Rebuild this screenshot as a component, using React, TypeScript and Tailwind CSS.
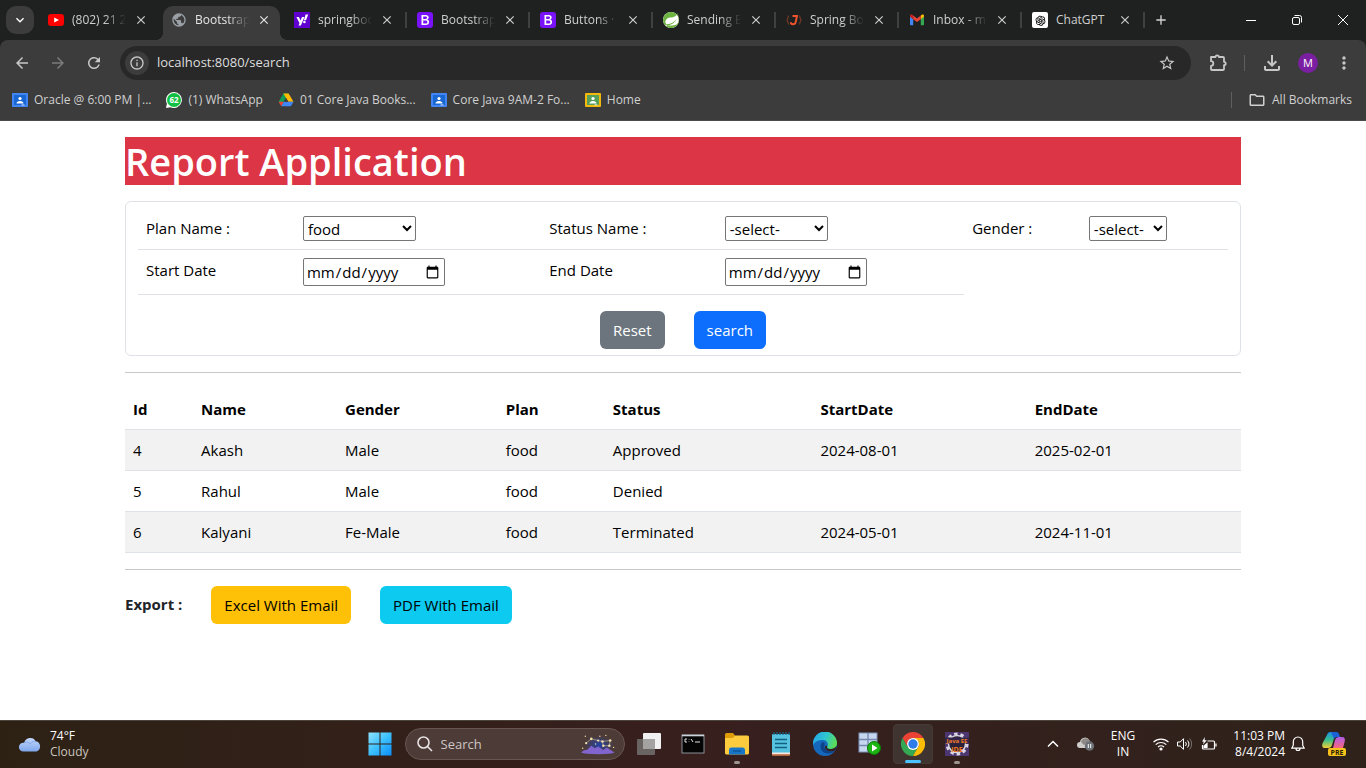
import type { ReactNode } from 'react';
import { AiOutlineOpenAI } from 'react-icons/ai';
import { SiSpring } from 'react-icons/si';
import {
  MdAdd,
  MdArrowBack,
  MdArrowForward,
  MdClose,
  MdInfoOutline,
  MdKeyboardArrowDown,
  MdMoreVert,
  MdOutlineFileDownload,
  MdOutlineFolder,
  MdPublic,
  MdRefresh,
  MdStarBorder,
} from 'react-icons/md';

/* ---------- brand drawings ---------- */

function YouTubeIcon() {
  return (
    <svg viewBox="0 0 16 16" className="size-4">
      <rect x="0" y="2" width="16" height="12" rx="3" fill="#ff0000" />
      <path d="M6.2 5.4v5.2L11 8z" fill="#fff" />
    </svg>
  );
}

function YahooIcon() {
  return (
    <svg viewBox="0 0 16 16" className="size-4">
      <rect width="16" height="16" fill="#6001d2" />
      <path d="M2.4 5h2.5l1.6 3.600L8 5h2.400L6.900 13.400H4.500l1-2.400z" fill="#fff" />
      <path d="M11.600 2.600h2.600L12 8.200H9.900z" fill="#fff" />
      <circle cx="10.400" cy="10" r="1.300" fill="#fff" />
    </svg>
  );
}

function BootstrapIcon() {
  return (
    <svg viewBox="0 0 16 16" className="size-4">
      <rect width="16" height="16" rx="3" fill="#7a12f9" />
      <path
        fillRule="evenodd"
        fill="#fff"
        d="M4.500 3h4.200c1.900 0 3 1 3 2.500 0 1-.7 1.900-1.700 2.100 1.300.2 2.100 1.100 2.100 2.400 0 1.900-1.300 3-3.400 3H4.500zM6.200 4.400v2.700h1.900c1.200 0 1.900-.5 1.900-1.400 0-.8-.6-1.300-1.600-1.300zM6.200 8.400v3.200h2.200c1.300 0 2-.6 2-1.600s-.8-1.600-2.100-1.600z"
      />
    </svg>
  );
}

function SpringIcon() {
  return (
    <span className="flex size-4 items-center justify-center rounded-full bg-white">
      <SiSpring className="size-4 text-[#6db33f]" />
    </span>
  );
}

function JavaBracesIcon() {
  return (
    <svg viewBox="0 0 16 16" className="size-4" fill="none">
      <path d="M3 3.500C1.500 3.500 2.500 8 .5 8c2 0 1 4.500 2.500 4.500M13 3.500c1.500 0 .5 4.500 2.500 4.500-2 0-1 4.500-2.500 4.500" stroke="#8f3f2a" strokeWidth="1" />
      <path d="M6.500 4h4.500L9.700 10c-.4 1.700-1.300 2.300-2.700 2.300-1.300 0-2.200-.7-2.200-2" stroke="#f0532d" strokeWidth="1.900" />
    </svg>
  );
}

function GmailIcon() {
  return (
    <svg viewBox="0 0 16 16" className="size-4">
      <path d="M1 4v8.200c0 .6.400 1 1 1h2.200V7z" fill="#4285f4" />
      <path d="M15 4v8.200c0 .6-.4 1-1 1h-2.200V7z" fill="#34a853" />
      <path d="M11.800 3.600V7.200L15 4.800V3.800c0-1.300-1.300-1.800-2.200-1z" fill="#fbbc04" />
      <path d="M1 4.800l3.200 2.400V3.600l-1-.8C2.300 2 1 2.500 1 3.800z" fill="#c5221f" />
      <path d="M4.200 3.500L8 6.400l3.800-2.900v3.700L8 10.100 4.200 7.200z" fill="#ea4335" />
    </svg>
  );
}

function ChatGptIcon() {
  return (
    <span className="flex size-4 items-center justify-center rounded-xs bg-white">
      <AiOutlineOpenAI className="text-black" size={13} />
    </span>
  );
}

function ClassroomIcon({ frame, board }: { frame: string; board: string }) {
  return (
    <svg viewBox="0 0 16 16" className="size-4">
      <rect x="0" y="1" width="16" height="14" rx="1" fill={frame} />
      <rect x="2" y="3" width="12" height="10" fill={board} />
      <circle cx="8" cy="6.500" r="1.600" fill="#fff" />
      <path d="M4.500 11.500c0-1.800 1.600-2.600 3.500-2.600s3.500.8 3.500 2.600z" fill="#fff" />
      <rect x="9.500" y="12.200" width="3" height="1.300" fill="#fff" opacity=".6" />
    </svg>
  );
}

function WhatsAppIcon() {
  return (
    <svg viewBox="0 0 16 16" className="size-4">
      <path d="M8 0a8 8 0 1 1-3.600 15.200L0 16l.9-4.300A8 8 0 0 1 8 0z" fill="#fff" />
      <circle cx="8" cy="8" r="7" fill="#12c144" />
      <text x="8" y="10.800" textAnchor="middle" fontSize="8" fontWeight="700" fill="#fff" fontFamily="Open Sans, sans-serif">
        62
      </text>
    </svg>
  );
}

function DriveIcon() {
  return (
    <svg viewBox="0 0 16 16" className="size-4">
      <path d="M5.400 1.500h5.200L8 6 3.400 14 .8 9.500z" fill="#0f9d58" />
      <path d="M5.400 1.500h5.200l4.900 8.300h-5.200z" fill="#ffba00" />
      <path d="M5.700 9.800h9.800L12.900 14.200H3.200z" fill="#4285f4" />
      <path d="M.6 9.800h5.100l-2.500 4.400z" fill="#ea4335" />
      <path d="M8 6l2.200 3.800H5.800z" fill="#3c3c3c" />
    </svg>
  );
}

function PuzzleIcon() {
  return (
    <svg viewBox="0 0 20 20" className="size-5" fill="none" stroke="currentColor" strokeWidth="1.800" strokeLinejoin="round">
      <path d="M3 4h4.500a1.700 1.700 0 0 1 3.400 0H15a1 1 0 0 1 1 1v3.800a1.700 1.700 0 0 1 0 3.400V16a1 1 0 0 1-1 1H4a1 1 0 0 1-1-1v-3.200a2.300 2.300 0 0 0 0-4.600z" />
    </svg>
  );
}

function WindowsIcon() {
  return (
    <svg viewBox="0 0 24 24" className="size-6">
      <defs>
        <linearGradient id="win" x1="0" y1="0" x2="1" y2="1">
          <stop offset="0" stopColor="#8fe3ff" />
          <stop offset=".5" stopColor="#3cc0fd" />
          <stop offset="1" stopColor="#0a8ffb" />
        </linearGradient>
      </defs>
      <path d="M.5.500h11v11H.5zM12.500.500h11v11h-11zM.5 12.500h11v11H.5zM12.500 12.500h11v11h-11z" fill="url(#win)" />
    </svg>
  );
}

function CloudIcon() {
  return (
    <svg viewBox="0 0 26 18" className="h-4 w-6">
      <defs>
        <linearGradient id="cloud" x1="0" y1="0" x2="0" y2="1">
          <stop offset="0" stopColor="#c3d9fc" />
          <stop offset="1" stopColor="#7ea6ec" />
        </linearGradient>
      </defs>
      <path d="M5.500 17.500a5 5 0 0 1 0-10h1A7 7 0 0 1 19.500 6a6 6 0 0 1 1 11.500z" fill="url(#cloud)" />
      <path d="M7 7.500c3-1.500 5.500 0 6.500 2M13 9c2-3 5-3.500 7-2.500" stroke="#7fa6e8" strokeWidth="1" fill="none" />
    </svg>
  );
}

function ConstellationIcon() {
  return (
    <svg viewBox="0 0 40 24" className="h-6 w-10">
      <defs>
        <radialGradient id="night">
          <stop offset="0" stopColor="#2443a8" />
          <stop offset="1" stopColor="#2443a8" stopOpacity="0" />
        </radialGradient>
      </defs>
      <ellipse cx="21" cy="13" rx="17" ry="10" fill="url(#night)" />
      <path d="M0 22q4-4 7-3l5-5 4 3 4-2 6 4 4-3 9 6q-3 2-19 2T0 22z" fill="#8264cf" />
      <path d="M6 11l6-5 8 2 5 1 9-1-1 6h-7l-1-5" fill="none" stroke="#c4b78f" strokeWidth=".8" />
      <g fill="#f1dfae">
        <circle cx="6" cy="11" r="1.300" />
        <circle cx="12" cy="6" r="1.500" />
        <circle cx="20" cy="8" r="1.300" />
        <circle cx="25" cy="9" r="1.500" />
        <circle cx="34" cy="8" r="1.500" />
        <circle cx="33" cy="14" r="1.500" />
        <circle cx="26" cy="14" r="1.400" />
        <circle cx="5" cy="3" r=".8" />
        <circle cx="22" cy="3" r=".8" />
        <circle cx="2" cy="17" r=".8" />
        <circle cx="17" cy="12" r=".8" />
        <circle cx="29" cy="2" r=".8" />
        <circle cx="38" cy="16" r=".8" />
      </g>
    </svg>
  );
}

function TaskViewIcon() {
  return (
    <svg viewBox="0 0 24 24" className="size-6">
      <rect x="6" y="1" width="18" height="16" rx="1" fill="#f1f1f1" />
      <rect x="0" y="7" width="18" height="16" rx="1" fill="#6f6b69" fillOpacity=".9" />
      <rect x="6" y="7" width="12" height="10" fill="#a5a3a2" />
    </svg>
  );
}

function TerminalIcon() {
  return (
    <svg viewBox="0 0 24 24" className="size-6">
      <rect x="1" y="3" width="22" height="18" fill="#050505" stroke="#8b9197" />
      <path d="M1 3.500h22" stroke="#cbd3da" strokeWidth="1.600" />
      <path d="M6 7H4v3h2M8 7.500v.5M8 9.500v.5M10 7l2 3M14 10h5" stroke="#e5e5e5" strokeWidth="1" fill="none" />
    </svg>
  );
}

function ExplorerIcon() {
  return (
    <svg viewBox="0 0 24 24" className="size-6">
      <path d="M0 2.500A1.500 1.500 0 0 1 1.500 1H8l2 2.500V6H0z" fill="#dd9c08" />
      <path d="M0 6h8l2-2.500h12.500A1.500 1.500 0 0 1 24 5v16a1.500 1.500 0 0 1-1.500 1.500h-21A1.500 1.500 0 0 1 0 21z" fill="#fdcb3e" />
      <path d="M4 22.500V18a2.500 2.500 0 0 1 2.500-2.500h11A2.500 2.500 0 0 1 20 18v4.500z" fill="#1876c9" />
      <path d="M8 19h8" stroke="#0c4f8f" strokeWidth="1.200" />
    </svg>
  );
}

function NotepadIcon() {
  return (
    <svg viewBox="0 0 24 24" className="size-6">
      <rect x="3" y="2" width="18" height="20" rx="1" fill="#56c2df" />
      <path d="M3 20.500h18v2a1 1 0 0 1-1 1H4a1 1 0 0 1-1-1z" fill="#f3e9e2" />
      <path d="M3 23h18" stroke="#b8592a" strokeWidth="1.400" />
      <path d="M5 0v3M8 0v3M11 0v3M14 0v3M17 0v3M20 0v3" stroke="#14668a" strokeWidth="1.200" />
      <path d="M6 7.500h12M6 11.500h12M6 15.500h12" stroke="#10607f" strokeWidth="1.500" />
    </svg>
  );
}

function EdgeIcon() {
  return (
    <svg viewBox="0 0 24 24" className="size-6">
      <defs>
        <linearGradient id="edgeTop" x1="0" y1=".3" x2="1" y2=".6">
          <stop offset="0" stopColor="#26a6e8" />
          <stop offset=".5" stopColor="#2fc6cf" />
          <stop offset="1" stopColor="#5fe04c" />
        </linearGradient>
      </defs>
      <circle cx="12" cy="12" r="12" fill="#1668bd" />
      <path d="M0 12A12 12 0 0 1 24 11c0 4-3 6-6.500 6-3 0-4-1.200-3.300-2.200 1.300-2 .8-6.300-4-6.800C5 7.500 1.500 10 0 13z" fill="url(#edgeTop)" />
      <path d="M9 10.500c-3 3.500-1.500 10.500 5.500 11 3 .2 6-1 7.500-3-2 1.300-12 1.500-10.500-5.500.5-2-.5-3.500-2.500-2.500z" fill="#0f4388" />
      <path d="M14.200 14.800c-.7 1 .3 2.200 3.300 2.200 2.500 0 4.800-1 5.800-3l-.9 4.300c-3.500 1.700-10 1.200-10.400-3.300-.1-1.500 2.600-1.500 2.200-.2z" fill="#33221d" />
    </svg>
  );
}

function ServerRunIcon() {
  return (
    <svg viewBox="0 0 24 24" className="size-6">
      <rect x="2" y="1" width="18" height="19" fill="#c7d7ef" stroke="#7f95bb" />
      <path d="M2 7.500h18M2 13.500h18M11 1v19" stroke="#7288b0" strokeWidth="1.300" />
      <circle cx="17" cy="16" r="6.500" fill="#1db513" stroke="#0b7d08" />
      <path d="M15 12.500v7l5.500-3.500z" fill="#fff" />
    </svg>
  );
}

function ChromeIcon() {
  return (
    <svg viewBox="0 0 24 24" className="size-6">
      <path d="M1.600 6A12 12 0 0 0 12 24l5.200-9L12 12 6.800 15z" fill="#34a853" />
      <path d="M22.400 6A12 12 0 0 1 12 24l5.200-9A6 6 0 0 0 17.200 9L12 6z" fill="#fbbc05" />
      <path d="M1.600 6A12 12 0 0 1 22.400 6H12a6 6 0 0 0-5.200 9z" fill="#ea4335" />
      <circle cx="12" cy="12" r="6" fill="#fff" />
      <circle cx="12" cy="12" r="4.700" fill="#2f7be9" />
    </svg>
  );
}

function EclipseIcon() {
  return (
    <svg viewBox="0 0 24 24" className="size-6">
      <rect width="24" height="24" fill="#4b3672" />
      <circle cx="12" cy="12" r="10" fill="none" stroke="#d9d6df" strokeWidth="3" strokeDasharray="3.400 2.883" />
      <circle cx="12" cy="12" r="8.500" fill="#2b2138" stroke="#d9d6df" strokeWidth="1.500" />
      <rect x="0" y="5.500" width="24" height="6" fill="#33264a" />
      <g fontFamily="Open Sans, sans-serif" fontWeight="700" fill="#f47a1c" textAnchor="middle">
        <text x="12" y="10.500" fontSize="6">Java EE</text>
        <text x="12" y="19.500" fontSize="7">IDE</text>
      </g>
    </svg>
  );
}

function CopilotIcon() {
  return (
    <svg viewBox="0 0 24 24" className="size-6">
      <defs>
        <linearGradient id="copA" x1="0" y1="0" x2="0" y2="1">
          <stop offset="0" stopColor="#1a8fe8" />
          <stop offset=".5" stopColor="#38c08c" />
          <stop offset="1" stopColor="#f3cf30" />
        </linearGradient>
        <linearGradient id="copB" x1="0" y1="0" x2="0" y2="1">
          <stop offset="0" stopColor="#b05de8" />
          <stop offset="1" stopColor="#f5687c" />
        </linearGradient>
      </defs>
      <path d="M5 3a4 4 0 0 1 4-3h5l-4 13a4 4 0 0 1-4 3H3c-2.500 0-3.300-2-2.600-4.500z" fill="url(#copA)" />
      <path d="M9 0h5.500A3 3 0 0 1 17 2l1 3h-3c-1.500 0-2.500 1-3 2z" fill="#1b62d8" />
      <path d="M13 8a4 4 0 0 1 3.500-3H20c2.500 0 3.400 2 2.700 4.500L21 16H11z" fill="url(#copB)" />
      <rect x="6" y="16" width="18" height="8" rx="2" fill="#f8c31c" />
      <text x="15" y="22.700" fontSize="7" fontWeight="700" textAnchor="middle" fill="#2b1d00" fontFamily="Open Sans, sans-serif">
        PRE
      </text>
    </svg>
  );
}

/* ---------- browser ---------- */

type Tab = { title: string; icon: ReactNode; active?: boolean; divider?: boolean };

const tabs: Tab[] = [
  { title: '(802) 21 25', icon: <YouTubeIcon /> },
  { title: 'Bootstrap d', icon: <MdPublic className="size-4 text-[#9aa0a6]" />, active: true },
  { title: 'springboot', icon: <YahooIcon />, divider: true },
  { title: 'Bootstrap ·', icon: <BootstrapIcon />, divider: true },
  { title: 'Buttons · B', icon: <BootstrapIcon />, divider: true },
  { title: 'Sending Em', icon: <SpringIcon />, divider: true },
  { title: 'Spring Boot', icon: <JavaBracesIcon />, divider: true },
  { title: 'Inbox - mo', icon: <GmailIcon />, divider: true },
  { title: 'ChatGPT', icon: <ChatGptIcon />, divider: true },
];

function BrowserTab({ title, icon, active, divider }: Tab) {
  return (
    <div className="flex h-10 w-[123px] min-w-0 shrink items-end">
      <div
        className={
          active
            ? 'relative flex h-[34px] min-w-0 grow items-center rounded-t-[10px] bg-[#3c3c3c] pr-[9px] pl-2 text-[#e6e6e6]'
            : 'flex h-[34px] min-w-0 grow items-center pr-[11px] pl-2 text-[#cfcfcf]'
        }
      >
        {active && (
          <>
            <span className="absolute bottom-0 -left-2 size-2 bg-[radial-gradient(circle_at_0_0,#1f2120_8px,#3c3c3c_8px)]" />
            <span className="absolute -right-2 bottom-0 size-2 bg-[radial-gradient(circle_at_100%_0,#1f2120_8px,#3c3c3c_8px)]" />
          </>
        )}
        <button type="button" className="mb-1.5 flex min-w-0 grow items-center gap-2">
          <span className="shrink-0">{icon}</span>
          <span
            className={
              title === 'ChatGPT'
                ? 'w-[54px] overflow-hidden text-left whitespace-nowrap'
                : 'w-[54px] overflow-hidden [mask-image:linear-gradient(to_right,black_60%,transparent)] text-left whitespace-nowrap'
            }
          >
            {title}
          </span>
        </button>
        <button type="button" aria-label={`Close ${title}`} className="mb-1.5 shrink-0">
          <MdClose className="size-3.5" />
        </button>
      </div>
      <span
        className={
          divider
            ? 'mr-0.5 mb-3 h-4 w-0.5 shrink-0 bg-[#3f4140]'
            : active
              ? 'mr-1 w-0.5 shrink-0'
              : 'mr-0.5 w-0.5 shrink-0'
        }
      />
    </div>
  );
}

function TabStrip() {
  return (
    <div className="flex h-10 bg-[#1f2120] text-[12px] text-[#d5d5d5]">
      <div className="flex w-10 shrink-0 items-center pl-1.5">
        <button type="button" aria-label="Search tabs" className="flex size-7 items-center justify-center rounded-[10px] bg-[#3c3c3c]">
          <MdKeyboardArrowDown className="size-4 text-white" />
        </button>
      </div>
      {tabs.map((tab, i) => (
        <BrowserTab key={i} {...tab} />
      ))}
      <button type="button" aria-label="New tab" className="flex w-7 shrink-0 items-center justify-center">
        <MdAdd className="size-4" />
      </button>
      <div className="ml-auto flex shrink-0 text-white">
        <button type="button" aria-label="Minimize" className="flex w-[46px] items-center justify-center">
          <svg viewBox="0 0 10 10" className="size-2.5" stroke="currentColor"><path d="M0 5.500h10" /></svg>
        </button>
        <button type="button" aria-label="Restore" className="flex w-[46px] items-center justify-center">
          <svg viewBox="0 0 10 10" className="size-2.5" fill="none" stroke="currentColor">
            <rect x=".5" y="2.500" width="7" height="7" rx="1.500" />
            <path d="M2.500.5h5a2 2 0 0 1 2 2v5" />
          </svg>
        </button>
        <button type="button" aria-label="Close window" className="flex w-[46px] items-center justify-center">
          <svg viewBox="0 0 10 10" className="size-2.5" stroke="currentColor"><path d="M0 0l10 10M10 0L0 10" /></svg>
        </button>
      </div>
    </div>
  );
}

function Toolbar() {
  return (
    <div className="flex h-[46px] items-center rounded-t-lg bg-[#3c3c3c] pr-3 pl-[13px] text-[#c7c7c7]">
      <button type="button" aria-label="Back"><MdArrowBack className="size-[18px]" /></button>
      <button type="button" aria-label="Forward" className="ml-[18px] text-[#7b7b7b]"><MdArrowForward className="size-[18px]" /></button>
      <button type="button" aria-label="Reload" className="ml-[18px]"><MdRefresh className="size-[18px]" /></button>
      <div className="ml-[17px] flex h-[34px] grow items-center rounded-full bg-[#282828] pr-[15px] pl-[5px]">
        <button type="button" aria-label="Site information" className="flex size-6 items-center justify-center rounded-full bg-[#3c3c3c]">
          <MdInfoOutline className="size-4" />
        </button>
        <input
          aria-label="Address"
          defaultValue="localhost:8080/search"
          className="ml-2 min-w-0 grow bg-transparent text-[13px] text-[#dedede] outline-none"
        />
        <button type="button" aria-label="Bookmark this page"><MdStarBorder className="size-[18px]" /></button>
      </div>
      <button type="button" aria-label="Extensions" className="ml-[17px]"><PuzzleIcon /></button>
      <span className="ml-4 h-4 w-px bg-[#5f5f5f]" />
      <button type="button" aria-label="Downloads" className="ml-[15px]"><MdOutlineFileDownload className="size-6" /></button>
      <button type="button" aria-label="Profile" className="ml-3.5 flex size-5 items-center justify-center rounded-full bg-[#7b1fa2] text-[11px] text-white">M</button>
      <button type="button" aria-label="Menu" className="ml-4"><MdMoreVert className="size-5" /></button>
    </div>
  );
}

function Bookmark({ icon, children }: { icon: ReactNode; children: ReactNode }) {
  return (
    <a href="#" className="flex items-center gap-1.5 whitespace-nowrap">
      {icon}
      {children}
    </a>
  );
}

function BookmarksBar() {
  return (
    <nav className="flex h-[35px] items-center gap-[15px] border-b border-[#4a4a4a] bg-[#3c3c3c] pr-3.5 pb-1.5 pl-3 text-[12px] text-[#d0d0d0]">
      <Bookmark icon={<ClassroomIcon frame="#4285f4" board="#1967d2" />}>Oracle @ 6:00 PM |...</Bookmark>
      <Bookmark icon={<WhatsAppIcon />}>(1) WhatsApp</Bookmark>
      <Bookmark icon={<DriveIcon />}>01 Core Java Books...</Bookmark>
      <Bookmark icon={<ClassroomIcon frame="#4285f4" board="#1967d2" />}>Core Java 9AM-2 Fo...</Bookmark>
      <Bookmark icon={<ClassroomIcon frame="#f4b90b" board="#57a05b" />}>Home</Bookmark>
      <div className="ml-auto flex items-center gap-4">
        <span className="h-4 w-px bg-[#5f5f5f]" />
        <Bookmark icon={<MdOutlineFolder className="size-[18px]" />}>All Bookmarks</Bookmark>
      </div>
    </nav>
  );
}

/* ---------- report page ---------- */

const reports = [
  { id: 4, name: 'Akash', gender: 'Male', plan: 'food', status: 'Approved', start: '2024-08-01', end: '2025-02-01' },
  { id: 5, name: 'Rahul', gender: 'Male', plan: 'food', status: 'Denied', start: '', end: '' },
  { id: 6, name: 'Kalyani', gender: 'Fe-Male', plan: 'food', status: 'Terminated', start: '2024-05-01', end: '2024-11-01' },
];

const selectStyle = 'block h-[25px] rounded-xs border border-[#767676] bg-white text-black';
const dateStyle = 'block h-7 w-[142px] rounded-xs border border-[#767676] bg-white px-0.5 text-black';
const buttonStyle = 'h-[38px] rounded-md px-[13px]';

function SearchForm() {
  return (
    <form className="mt-4 rounded-md border border-[#dee2e6] px-3 py-1.5" onSubmit={(e) => e.preventDefault()}>
      <table className="w-full table-fixed border-collapse text-left align-top text-black">
        <colgroup>
          <col className="w-[14.4%]" />
          <col className="w-[22.6%]" />
          <col className="w-[16.1%]" />
          <col className="w-[22.7%]" />
          <col className="w-[10.7%]" />
          <col />
        </colgroup>
        <tbody className="align-top">
          <tr>
            <td className="border-b border-[#dee2e6] p-2"><label htmlFor="plan">Plan Name :</label></td>
            <td className="border-b border-[#dee2e6] p-2">
              <select id="plan" defaultValue="food" className={`${selectStyle} w-[113px]`}><option>food</option></select>
            </td>
            <td className="border-b border-[#dee2e6] p-2"><label htmlFor="status">Status Name :</label></td>
            <td className="border-b border-[#dee2e6] p-2">
              <select id="status" className={`${selectStyle} w-[103px]`}><option>-select-</option></select>
            </td>
            <td className="border-b border-[#dee2e6] p-2"><label htmlFor="gender">Gender :</label></td>
            <td className="border-b border-[#dee2e6] p-2">
              <select id="gender" className={`${selectStyle} w-[78px]`}><option>-select-</option></select>
            </td>
          </tr>
          <tr>
            <td className="border-b border-[#dee2e6] p-2"><label htmlFor="start">Start Date</label></td>
            <td className="border-b border-[#dee2e6] p-2"><input id="start" type="date" className={dateStyle} /></td>
            <td className="border-b border-[#dee2e6] p-2"><label htmlFor="end">End Date</label></td>
            <td className="border-b border-[#dee2e6] p-2"><input id="end" type="date" className={dateStyle} /></td>
          </tr>
        </tbody>
      </table>
      <div className="mt-4 flex justify-center gap-[29px] text-white">
        <button type="reset" className={`${buttonStyle} bg-[#6c757d]`}>Reset</button>
        <button type="submit" className={`${buttonStyle} bg-[#0d6efd]`}>search</button>
      </div>
    </form>
  );
}

function ResultsTable() {
  return (
    <table className="w-full table-fixed border-collapse text-left text-black">
      <colgroup>
        <col className="w-[6.1%]" />
        <col className="w-[12.9%]" />
        <col className="w-[14.4%]" />
        <col className="w-[9.6%]" />
        <col className="w-[18.6%]" />
        <col className="w-[19.2%]" />
        <col />
      </colgroup>
      <thead>
        <tr className="border-b border-[#dee2e6]">
          {['Id', 'Name', 'Gender', 'Plan', 'Status', 'StartDate', 'EndDate'].map((h) => (
            <th key={h} className="p-2 font-bold">{h}</th>
          ))}
        </tr>
      </thead>
      <tbody>
        {reports.map((r) => (
          <tr key={r.id} className="h-[41px] border-b border-[#dee2e6] odd:bg-[#f2f2f2]">
            <td className="p-2">{r.id}</td>
            <td className="p-2">{r.name}</td>
            <td className="p-2">{r.gender}</td>
            <td className="p-2">{r.plan}</td>
            <td className="p-2">{r.status}</td>
            <td className="p-2">{r.start}</td>
            <td className="p-2">{r.end}</td>
          </tr>
        ))}
      </tbody>
    </table>
  );
}

function ReportPage() {
  return (
    <main className="grow bg-white text-[15px] leading-6 text-[#212529]">
      <div className="mx-auto max-w-[1140px] px-3 py-4">
        <h1 className="bg-[#dc3545] text-[38px] leading-12 font-semibold text-white">Report Application</h1>
        <SearchForm />
        <hr className="my-4 border-[#c7c8c9]" />
        <ResultsTable />
        <hr className="my-4 border-[#c7c8c9]" />
        <div className="flex gap-[29px] text-black">
          <b className="pt-1.5 font-bold text-[#212529]">Export :</b>
          <button type="button" className={`${buttonStyle} bg-[#ffc107]`}>Excel With Email</button>
          <button type="button" className={`${buttonStyle} bg-[#0dcaf0]`}>PDF With Email</button>
        </div>
      </div>
    </main>
  );
}

/* ---------- taskbar ---------- */

const apps: { name: string; icon: ReactNode; state?: 'open' | 'focused' }[] = [
  { name: 'Task view', icon: <TaskViewIcon /> },
  { name: 'Command prompt', icon: <TerminalIcon /> },
  { name: 'File Explorer', icon: <ExplorerIcon />, state: 'open' },
  { name: 'Notepad', icon: <NotepadIcon /> },
  { name: 'Edge', icon: <EdgeIcon /> },
  { name: 'Server', icon: <ServerRunIcon /> },
  { name: 'Chrome', icon: <ChromeIcon />, state: 'focused' },
  { name: 'Eclipse', icon: <EclipseIcon />, state: 'open' },
];

function Taskbar() {
  return (
    <footer className="grid h-12 grid-cols-[1fr_auto_1fr] items-center bg-linear-to-r from-[#2d2114] via-[#371f1e] to-[#2f221b] text-[12px] leading-4 text-white shadow-[inset_0_1px_0_#4b443d]">
      <div className="flex items-center gap-2 pl-[18px]">
        <CloudIcon />
        <div>
          <div>74°F</div>
          <div className="text-[#c9c4bf]">Cloudy</div>
        </div>
      </div>

      <div className="flex items-center pr-[22px]">
        <button type="button" aria-label="Start" className="mr-[13px]"><WindowsIcon /></button>
        <label className="mr-1 flex h-8 w-[220px] items-center rounded-full border border-[#695653] bg-[#4d3b38] pr-2 pl-[11px]">
          <svg viewBox="0 0 16 16" className="size-4 shrink-0" fill="none" stroke="#e6e2e1" strokeWidth="1.600">
            <circle cx="6.500" cy="6.500" r="5.500" />
            <path d="M10.500 10.500l4.500 4.500" />
          </svg>
          <input aria-label="Search" placeholder="Search" className="ml-2 min-w-0 grow bg-transparent text-[13px] outline-none placeholder:text-[#cdc6c4]" />
          <ConstellationIcon />
        </label>
        <div className="flex gap-1">
          {apps.map((app) => (
            <button
              key={app.name}
              type="button"
              aria-label={app.name}
              className={
                app.state === 'focused'
                  ? 'relative flex size-10 items-center justify-center rounded-sm border border-[#463a36] bg-[#3f3430]'
                  : 'relative flex size-10 items-center justify-center'
              }
            >
              {app.icon}
              {app.state === 'open' && <span className="absolute bottom-0 h-[3px] w-1.5 rounded-full bg-[#9c938f]" />}
              {app.state === 'focused' && <span className="absolute bottom-0 h-[3px] w-4 rounded-full bg-[#4cc2ff]" />}
            </button>
          ))}
        </div>
      </div>

      <div className="flex items-center justify-end pr-5">
        <svg viewBox="0 0 12 12" className="size-3" fill="none" stroke="currentColor" strokeWidth="1.500"><path d="M1 8.500l5-5 5 5" /></svg>
        <svg viewBox="0 0 18 14" className="ml-[18px] h-3.5 w-[18px]">
          <path d="M3 11a3 3 0 0 1 0-6 5 5 0 0 1 9.500-1.500V11z" fill="#cfcdcb" />
          <path d="M4 5a5 5 0 0 1 9-1.500L7 8z" fill="#8d8986" />
          <circle cx="12.500" cy="9" r="4.700" fill="#6b7076" />
          <path d="M11.300 7v4M13.700 7v4" stroke="#fff" strokeWidth="1" />
        </svg>
        <div className="ml-4 text-center"><div>ENG</div><div>IN</div></div>
        <svg viewBox="0 0 16 14" className="ml-[18px] h-3.5 w-4" fill="none" stroke="currentColor" strokeWidth="1.200">
          <path d="M.5 5.200a10.600 10.600 0 0 1 15 0M2.700 7.700a7.500 7.500 0 0 1 10.600 0M5 10a4.300 4.300 0 0 1 6 0" />
          <circle cx="8" cy="12" r="1" fill="currentColor" />
        </svg>
        <svg viewBox="0 0 16 14" className="ml-2 h-3.5 w-4" fill="none" stroke="currentColor">
          <path d="M.5 5h2.700l3.300-3.300v10.600L3.200 9H.5z" />
          <path d="M8.500 5a3 3 0 0 1 0 4M10.500 3.500a5 5 0 0 1 0 7" />
          <path d="M12.500 1.500a8 8 0 0 1 0 11" stroke="#77706c" />
        </svg>
        <svg viewBox="0 0 16 14" className="ml-2 h-3.5 w-4" fill="none" stroke="currentColor" strokeWidth="1.200">
          <path d="M6.500 4h6a1 1 0 0 1 1 1v6a1 1 0 0 1-1 1h-10a1 1 0 0 1-1-1V8M15 6.500v3" />
          <path d="M3 10.500V9l3-2.500V10.500z" fill="currentColor" />
          <path d="M4 0L1 4.500h1.800L2 7.500l3.800-4.300H3.500z" fill="currentColor" stroke="none" />
        </svg>
        <div className="ml-4 text-right whitespace-nowrap"><div>11:03 PM</div><div>8/4/2024</div></div>
        <svg viewBox="0 0 14 16" className="ml-1.5 h-4 w-3.5" fill="none" stroke="currentColor" strokeWidth="1.200">
          <path d="M7 1a4.700 4.700 0 0 1 4.700 4.700v3.500l1.500 3H.8l1.500-3V5.700A4.700 4.700 0 0 1 7 1zM5 12.500a2 2 0 0 0 4 0" />
        </svg>
        <span className="ml-[17px]"><CopilotIcon /></span>
      </div>
    </footer>
  );
}

export default function App() {
  return (
    <div className="flex min-h-screen flex-col bg-[#1f2120] font-['Open_Sans','Noto_Sans',sans-serif]">
      <TabStrip />
      <Toolbar />
      <BookmarksBar />
      <ReportPage />
      <Taskbar />
    </div>
  );
}
